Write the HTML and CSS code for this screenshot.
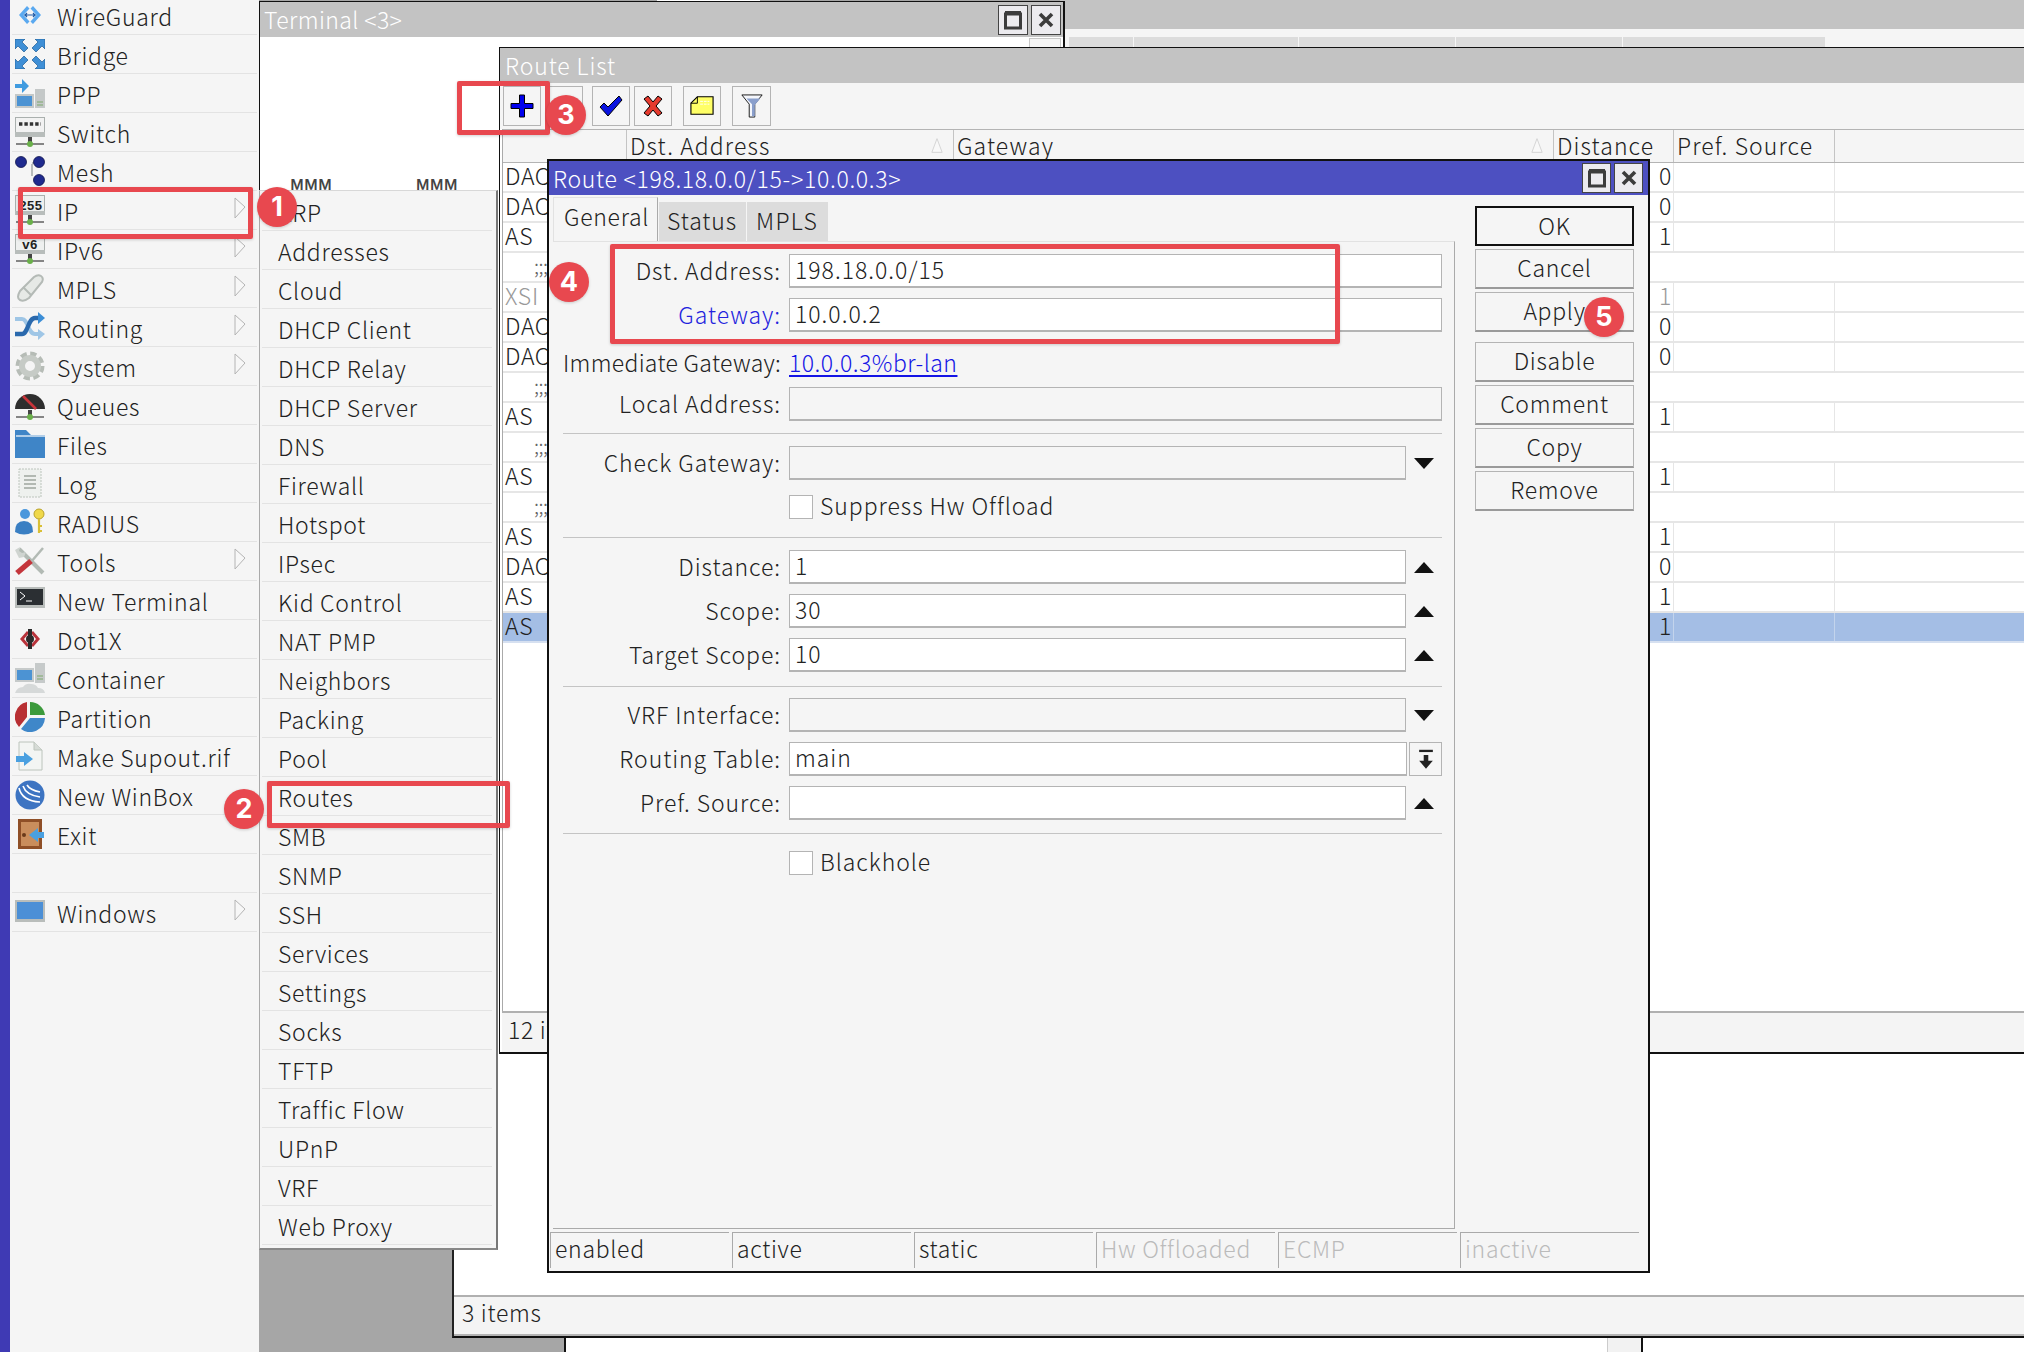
FILE: index.html
```html
<!DOCTYPE html>
<html lang="en">
<head>
<meta charset="utf-8">
<title>WinBox Route</title>
<link rel="stylesheet" href="styles.css">
</head>
<body>
<svg class="defs" width="0" height="0" aria-hidden="true">
  <symbol id="stand" viewBox="0 0 30 30">
    <rect x="13" y="20" width="4" height="7" fill="#444"/>
    <path d="M1 27h28" stroke="#555" stroke-width="1.4"/>
    <circle cx="15" cy="27" r="3" fill="#6ab04a"/>
  </symbol>
  <symbol id="chev" viewBox="0 0 12 24">
    <path d="M1 2v20L11 11Z" fill="#f7f7f7" stroke="#b4b4b4" stroke-width="1"/>
  </symbol>
</svg>
<div class="app">
  <div class="strip"></div>
  <nav class="menu">
    <div class="mrow"><svg class="ico" viewBox="0 0 30 30"><path d="M12 6 4 15l8 9 2.500-2.500L8.500 15l6-6.500zM18 6l8 9-8 9-2.500-2.500 6-6.500-6-6.500z" fill="#5aa9f0"/><path d="M9 15h12M12 13l-2 2 2 2M18 13l2 2-2 2" stroke="#1c5aa8" stroke-width="1.200" fill="none"/></svg><span>WireGuard</span></div>
    <div class="mrow"><svg class="ico" viewBox="0 0 30 30"><g fill="#3f8fd6" stroke="#1f5c94" stroke-width=".7"><path d="M0 0h10L7 3l6 6-4 4-6-6-3 3z"/><path d="M30 0H20l3 3-6 6 4 4 6-6 3 3z"/><path d="M0 30h10l-3-3 6-6-4-4-6 6-3-3z"/><path d="M30 30H20l3-3-6-6 4-4 6 6 3-3z"/></g></svg><span>Bridge</span></div>
    <div class="mrow"><svg class="ico" viewBox="0 0 30 30"><path d="M0 6h7V1l7 7-7 7v-5H0z" fill="#3f9be0"/><rect x="20" y="11" width="10" height="19" fill="#c4c8c8"/><rect x="0" y="16" width="19" height="14" fill="#c4c8c8"/><rect x="2" y="18" width="15" height="10" fill="#4c93d3"/><path d="M22 24h6M22 27h6" stroke="#7ca86c"/></svg><span>PPP</span></div>
    <div class="mrow"><svg class="ico" viewBox="0 0 30 30"><rect x=".5" y=".5" width="29" height="19" fill="#f2f2f2" stroke="#aab0ae"/><rect y="15" width="30" height="5" fill="#b8bdbb"/><path d="M4 7h22" stroke="#333" stroke-width="3.400" stroke-dasharray="3.400 2"/><use href="#stand" width="30" height="30"/></svg><span>Switch</span></div>
    <div class="mrow"><svg class="ico" viewBox="0 0 30 30"><path d="M17 7H20M17 8v12" stroke="#b8bcbc" stroke-width="2" fill="none"/><g fill="#1f2a8e" stroke="#10154e" stroke-width=".8"><circle cx="6" cy="6" r="5.500"/><circle cx="24" cy="6" r="5.500"/><circle cx="24" cy="24" r="5.500"/></g></svg><span>Mesh</span></div>
    <div class="mrow"><svg class="ico" viewBox="0 0 30 30"><rect x=".5" y=".5" width="29" height="19" fill="#eef0ef" stroke="#aab0ae"/><rect y="16" width="30" height="4" fill="#b8bdbb"/><text x="4" y="15" class="icotext">255</text><use href="#stand" width="30" height="30"/></svg><span>IP</span><svg class="chev"><use href="#chev"/></svg></div>
    <div class="mrow"><svg class="ico" viewBox="0 0 30 30"><rect x=".5" y=".5" width="29" height="19" fill="#eef0ef" stroke="#aab0ae"/><rect y="16" width="30" height="4" fill="#b8bdbb"/><text x="7" y="15" class="icotext">v6</text><use href="#stand" width="30" height="30"/></svg><span>IPv6</span><svg class="chev"><use href="#chev"/></svg></div>
    <div class="mrow"><svg class="ico" viewBox="0 0 30 30"><path d="M5 18 19 4q4-3 7-1t1 6L14 25q-5 4-9 2t0-9Z" fill="#e6e9e6" stroke="#b4bab6" stroke-width="2"/><path d="m8 14 8 8" stroke="#b4bab6" stroke-width="2"/></svg><span>MPLS</span><svg class="chev"><use href="#chev"/></svg></div>
    <div class="mrow"><svg class="ico" viewBox="0 0 30 30"><path d="M0 7h7c6 0 6 15 13 15h3" stroke="#9fc6e6" stroke-width="4" fill="none"/><path d="M23 17l7 5-7 6z" fill="#9fc6e6"/><path d="M0 22h7c6 0 6-16 13-16h3" stroke="#2a69ad" stroke-width="4.400" fill="none"/><path d="M23 0l7 6-7 6z" fill="#3c8ed6"/></svg><span>Routing</span><svg class="chev"><use href="#chev"/></svg></div>
    <div class="mrow"><svg class="ico" viewBox="0 0 30 30"><circle cx="15" cy="15" r="12" fill="none" stroke="#b6bcb6" stroke-width="5" stroke-dasharray="6 3.400"/><circle cx="15" cy="15" r="8" fill="none" stroke="#c6cbc6" stroke-width="6"/></svg><span>System</span><svg class="chev"><use href="#chev"/></svg></div>
    <div class="mrow"><svg class="ico" viewBox="0 0 30 30"><path d="M0 19a15 15 0 0 1 30 0Z" fill="#2e2e2e"/><path d="M8 6l13 13" stroke="#c8343a" stroke-width="2.600"/><use href="#stand" width="30" height="30"/></svg><span>Queues</span></div>
    <div class="mrow"><svg class="ico" viewBox="0 0 30 30"><path d="M0 1h11l5 5h14v23H0z" fill="#3f85c7"/><path d="M1 7h29" stroke="#e4eef6" stroke-width="1.400"/></svg><span>Files</span></div>
    <div class="mrow"><svg class="ico" viewBox="0 0 30 30"><rect x="4" y="1" width="22" height="28" fill="#eef1ee" stroke="#bcc4bc" stroke-dasharray="2 1"/><path d="M9 8h12M9 12h12M9 16h12M9 20h12" stroke="#9ea69e" stroke-width="1.400"/></svg><span>Log</span></div>
    <div class="mrow"><svg class="ico" viewBox="0 0 30 30"><circle cx="10" cy="7" r="5" fill="#4a97dc"/><path d="M0 25q0-11 9-11t9 11q-9 5-18 0Z" fill="#3a7fc3"/><circle cx="24" cy="7" r="5" fill="#f0d84a" stroke="#b8a22c"/><path d="M24 12v14M24 19h3M24 24h3" stroke="#d9bf36" stroke-width="2.200"/></svg><span>RADIUS</span></div>
    <div class="mrow"><svg class="ico" viewBox="0 0 30 30"><path d="M4 3l24 24" stroke="#b2bab4" stroke-width="4"/><path d="M0 4l5-3-1 4 3 2 4-1-2 5-5 1z" fill="#cfd4d0"/><path d="M28 2l-12 14" stroke="#b2bab4" stroke-width="2.500"/><path d="M16 15 2 27" stroke="#c4353b" stroke-width="5.500"/></svg><span>Tools</span><svg class="chev"><use href="#chev"/></svg></div>
    <div class="mrow"><svg class="ico" viewBox="0 0 30 30"><rect y="2" width="30" height="21" fill="#b9bdbb"/><rect x="2" y="4" width="26" height="16" fill="#2b2f33"/><path d="M5 7l5 4-5 4M11 16h6" stroke="#fff" stroke-width="1" fill="none"/></svg><span>New Terminal</span></div>
    <div class="mrow"><svg class="ico" viewBox="0 0 30 30"><path d="M12 7 5 15l7 8 2-2-5-6 5-6zM18 7l7 8-7 8-2-2 5-6-5-6z" fill="#b8323a"/><rect x="13" y="5" width="4" height="20" fill="#2a2a2a"/><circle cx="15" cy="15" r="4" fill="#2a2a2a"/></svg><span>Dot1X</span></div>
    <div class="mrow"><svg class="ico" viewBox="0 0 30 30"><rect x="20" y="0" width="10" height="20" fill="#c6caca"/><rect x="0" y="5" width="19" height="14" fill="#c6caca"/><rect x="2" y="7" width="15" height="10" fill="#4c93d3"/><path d="M22 13h6M22 16h6" stroke="#7ca86c"/><path d="M0 30q2-6 8-6 3-4 8-3 5 0 7 4 6 0 7 5z" fill="#d6d9d9"/></svg><span>Container</span></div>
    <div class="mrow"><svg class="ico" viewBox="0 0 30 30"><path d="M15 0v13H30A15 15 0 0 0 15 0Z" fill="#3c9a3c"/><path d="M12 0A15 15 0 0 0 4 25L12 15Z" fill="#b82f33"/><path d="M15 16h15A15 15 0 0 1 6 27Z" fill="#3f87c9"/></svg><span>Partition</span></div>
    <div class="mrow"><svg class="ico" viewBox="0 0 30 30"><path d="M4 1h15l8 8v20H4z" fill="#f3f5f3" stroke="#bcc4bc"/><path d="M19 1v8h8" fill="#d6dbd6" stroke="#bcc4bc"/><path d="M1 15h8v-4l9 7-9 7v-4H1z" fill="#4aa0e0"/></svg><span>Make Supout.rif</span></div>
    <div class="mrow"><svg class="ico" viewBox="0 0 30 30"><circle cx="15" cy="15" r="14.500" fill="#3d74c2"/><path d="M4 8q3 13 21 14M8 6q3 9 17 11M12 5q3 5 13 7" stroke="#fff" stroke-width="1.600" fill="none"/></svg><span>New WinBox</span></div>
    <div class="mrow"><svg class="ico" viewBox="0 0 30 30"><rect x="3" y="0" width="24" height="30" fill="#8f4f27"/><rect x="6" y="3" width="18" height="24" fill="#c98d5c"/><circle cx="9" cy="16" r="2" fill="#6a3a1a"/><path d="M29 13h-6V9l-9 7 9 7v-4h6z" fill="#4aa0e0"/></svg><span>Exit</span></div>
    <div class="mrow"></div>
    <div class="mrow"><svg class="ico" viewBox="0 0 30 30"><rect y="3" width="30" height="22" fill="#b9bdbb"/><rect x="2" y="5" width="26" height="17" fill="#4c8fd6"/></svg><span>Windows</span><svg class="chev"><use href="#chev"/></svg></div>
  </nav>

  <section class="win win-back">
    <div class="back-title"></div>
    <div class="back-tabs"><i class="bt1"></i><i class="bt2"></i><i class="bt3"></i><i class="bt4"></i><i class="bt5"></i></div>
  </section>

  <div class="top-scrap"></div>

  <section class="win win-under">
    <div class="under-body"></div>
    <div class="under-status">3 items</div>
  </section>

  <div class="under-tail">
    <div class="tail-text">TTT     TTT  MMMMM</div>
    <div class="tail-box"></div>
  </div>

  <section class="win win-term">
    <header class="title grey term-title"><span>Terminal &lt;3&gt;</span>
      <div class="wbtns">
        <button class="wbtn"><svg viewBox="0 0 20 20"><path d="M2.500 4v14h15V4zM2 2.500h16" fill="none" stroke="#3c3c3c" stroke-width="3"/></svg></button>
        <button class="wbtn"><svg viewBox="0 0 20 20"><path d="M4 4l12 12M16 4 4 16" stroke="#3c3c3c" stroke-width="3.600"/></svg></button>
      </div>
    </header>
    <div class="term-body"><pre class="term-text">MMM      MMM</pre><i class="term-box"></i></div>
  </section>

  <section class="win win-list">
    <header class="title grey list-title"><span>Route List</span></header>
    <div class="toolbar">
      <button class="tbtn"><svg viewBox="0 0 24 24"><path d="M9.500 1h5v8.500H23v5h-8.500V23h-5v-8.500H1v-5h8.500z" fill="#0000ee" stroke="#000" stroke-width="1"/></svg></button>
      <button class="tbtn"></button>
      <button class="tbtn tbtn-gap"><svg viewBox="0 0 24 24"><path d="M1 13l4-4 4 4L20 2l3 4L9 22z" fill="#0a14e0" stroke="#000" stroke-width="1"/></svg></button>
      <button class="tbtn"><svg viewBox="0 0 24 24"><path d="M3 5l4-3 5 6 5-6 4 3-6 7 6 7-4 3-5-6-5 6-4-3 6-7z" fill="#e63a2e" stroke="#000" stroke-width="1"/></svg></button>
      <button class="tbtn tbtn-gap2"><svg viewBox="0 0 26 24"><path d="M1 9l7-7h17v19H1z" fill="#ffff66" stroke="#000" stroke-width="1.200"/><path d="M8 2v7H1" fill="none" stroke="#000"/><path d="M11 7h10M11 10h10" stroke="#fff" stroke-dasharray="3 1"/></svg></button>
      <button class="tbtn tbtn-gap2 tbtn-wide"><svg viewBox="0 0 24 26"><path d="M1 1h22l-8 10v14H9V11z" fill="#f4f6fb" stroke="#111" stroke-width="1"/><path d="M6 5h15l-6 7v12h-3V11z" fill="#8a9fcc"/></svg></button>
    </div>
    <div class="table">
      <div class="thead"><div class="c c1"></div><div class="c c2">Dst. Address<svg class="sort" viewBox="0 0 14 18"><path d="M7 1 1 17h12z" fill="#f8f8f8" stroke="#cfcfcf"/></svg></div><div class="c c3">Gateway<svg class="sort" viewBox="0 0 14 18"><path d="M7 1 1 17h12z" fill="#f8f8f8" stroke="#cfcfcf"/></svg></div><div class="c c4">Distance</div><div class="c c5">Pref. Source</div></div>
      <div class="tr"><div class="c c1">DAC</div><div class="c c2"></div><div class="c c3"></div><div class="c c4 num">0</div><div class="c c5"></div></div>
      <div class="tr"><div class="c c1">DAC</div><div class="c c2"></div><div class="c c3"></div><div class="c c4 num">0</div><div class="c c5"></div></div>
      <div class="tr"><div class="c c1">AS</div><div class="c c2"></div><div class="c c3"></div><div class="c c4 num">1</div><div class="c c5"></div></div>
      <div class="tr note"><div class="c c1">;;;</div></div>
      <div class="tr off"><div class="c c1">XSI</div><div class="c c2"></div><div class="c c3"></div><div class="c c4 num">1</div><div class="c c5"></div></div>
      <div class="tr"><div class="c c1">DAC</div><div class="c c2"></div><div class="c c3"></div><div class="c c4 num">0</div><div class="c c5"></div></div>
      <div class="tr"><div class="c c1">DAC</div><div class="c c2"></div><div class="c c3"></div><div class="c c4 num">0</div><div class="c c5"></div></div>
      <div class="tr note"><div class="c c1">;;;</div></div>
      <div class="tr"><div class="c c1">AS</div><div class="c c2"></div><div class="c c3"></div><div class="c c4 num">1</div><div class="c c5"></div></div>
      <div class="tr note"><div class="c c1">;;;</div></div>
      <div class="tr"><div class="c c1">AS</div><div class="c c2"></div><div class="c c3"></div><div class="c c4 num">1</div><div class="c c5"></div></div>
      <div class="tr note"><div class="c c1">;;;</div></div>
      <div class="tr"><div class="c c1">AS</div><div class="c c2"></div><div class="c c3"></div><div class="c c4 num">1</div><div class="c c5"></div></div>
      <div class="tr"><div class="c c1">DAC</div><div class="c c2"></div><div class="c c3"></div><div class="c c4 num">0</div><div class="c c5"></div></div>
      <div class="tr"><div class="c c1">AS</div><div class="c c2"></div><div class="c c3"></div><div class="c c4 num">1</div><div class="c c5"></div></div>
      <div class="tr sel"><div class="c c1">AS</div><div class="c c2"></div><div class="c c3"></div><div class="c c4 num">1</div><div class="c c5"></div></div>
    </div>
    <div class="list-status">12 items</div>
  </section>

  <nav class="submenu">
    <div class="srow">ARP</div><div class="srow">Addresses</div><div class="srow">Cloud</div>
    <div class="srow">DHCP Client</div><div class="srow">DHCP Relay</div><div class="srow">DHCP Server</div>
    <div class="srow">DNS</div><div class="srow">Firewall</div><div class="srow">Hotspot</div>
    <div class="srow">IPsec</div><div class="srow">Kid Control</div><div class="srow">NAT PMP</div>
    <div class="srow">Neighbors</div><div class="srow">Packing</div><div class="srow">Pool</div>
    <div class="srow">Routes</div><div class="srow">SMB</div><div class="srow">SNMP</div>
    <div class="srow">SSH</div><div class="srow">Services</div><div class="srow">Settings</div>
    <div class="srow">Socks</div><div class="srow">TFTP</div><div class="srow">Traffic Flow</div>
    <div class="srow">UPnP</div><div class="srow">VRF</div><div class="srow">Web Proxy</div>
  </nav>

  <section class="win win-dlg">
    <header class="title blue"><span>Route &lt;198.18.0.0/15-&gt;10.0.0.3&gt;</span>
      <div class="wbtns wbtns-dlg">
        <button class="wbtn"><svg viewBox="0 0 20 20"><path d="M2.500 4v14h15V4zM2 2.500h16" fill="none" stroke="#3c3c3c" stroke-width="3"/></svg></button>
        <button class="wbtn"><svg viewBox="0 0 20 20"><path d="M4 4l12 12M16 4 4 16" stroke="#3c3c3c" stroke-width="3.600"/></svg></button>
      </div>
    </header>
    <div class="dlg-main">
      <div class="tabs-area">
        <div class="tabs"><div class="tab on">General</div><div class="tab t-status">Status</div><div class="tab t-mpls">MPLS</div></div>
        <div class="panel">
          <div class="group g1">
            <div class="frow"><label>Dst. Address:</label><div class="inp">198.18.0.0/15</div></div>
            <div class="frow"><label class="lnk">Gateway:</label><div class="inp">10.0.0.2</div></div>
            <div class="frow linkrow"><label>Immediate Gateway:</label><a class="ulink">10.0.0.3%br-lan</a></div>
            <div class="frow"><label>Local Address:</label><div class="inp dis"></div></div>
          </div>
          <div class="group g2">
            <div class="frow"><label>Check Gateway:</label><div class="inp dis"></div><i class="tri dn"></i></div>
            <div class="frow chk"><label></label><i class="box"></i><span>Suppress Hw Offload</span></div>
          </div>
          <div class="group g3">
            <div class="frow"><label>Distance:</label><div class="inp">1</div><i class="tri up"></i></div>
            <div class="frow"><label>Scope:</label><div class="inp">30</div><i class="tri up"></i></div>
            <div class="frow"><label>Target Scope:</label><div class="inp">10</div><i class="tri up"></i></div>
          </div>
          <div class="group g4">
            <div class="frow"><label>VRF Interface:</label><div class="inp dis"></div><i class="tri dn"></i></div>
            <div class="frow"><label>Routing Table:</label><div class="inp">main</div><button class="dropbtn"><svg viewBox="0 0 14 18"><path d="M1 1.500h12" stroke="#222" stroke-width="2"/><path d="M5 5h4v5h4L7 17 1 10h4z" fill="#222"/></svg></button></div>
            <div class="frow"><label>Pref. Source:</label><div class="inp"></div><i class="tri up"></i></div>
          </div>
          <div class="group g5">
            <div class="frow chk"><label></label><i class="box"></i><span>Blackhole</span></div>
          </div>
        </div>
      </div>
      <div class="actions">
        <button class="act def">OK</button>
        <button class="act">Cancel</button>
        <button class="act">Apply</button>
        <button class="act sp">Disable</button>
        <button class="act">Comment</button>
        <button class="act">Copy</button>
        <button class="act">Remove</button>
      </div>
    </div>
    <div class="dstatus">
      <div class="cell">enabled</div><div class="cell">active</div><div class="cell">static</div>
      <div class="cell ghost">Hw Offloaded</div><div class="cell ghost">ECMP</div><div class="cell ghost">inactive</div>
    </div>
  </section>

  <div class="mark m1"></div>
  <div class="mark m2"></div>
  <div class="mark m3"></div>
  <div class="mark m4"></div>
  <div class="badge b1">1</div>
  <div class="badge b2">2</div>
  <div class="badge b3">3</div>
  <div class="badge b4">4</div>
  <div class="badge b5">5</div>
</div>
</body>
</html>
```

FILE: styles.css
```css
* { box-sizing: border-box; }
html, body { margin: 0; padding: 0; }
body {
  width: 2024px; height: 1352px; overflow: hidden;
  font-family: "Noto Sans CJK JP", "Noto Sans", sans-serif;
  font-size: 23px; font-weight: 300; color: #222; letter-spacing: .7px;
}
.defs { position: absolute; }
.app { position: relative; display: flex; width: 2024px; height: 1352px; overflow: hidden; background: #a6a6a6; }
.strip { width: 10px; background: #3f3ab4; flex: none; }

/* left menu */
.menu { width: 249px; flex: none; background: #f5f5f5; margin-top: -4px; padding: 0 2px; }
.mrow { display: flex; align-items: center; height: 39px; padding-left: 3px; border-bottom: 1px solid #e3e3e3; white-space: nowrap; line-height: 38px; }
.mrow span { padding-top: 2px; }
.ico { width: 30px; height: 30px; flex: none; margin-right: 12px; }
.icotext { font-family: "Liberation Mono", monospace; font-weight: 700; font-size: 13px; letter-spacing: 0; fill: #222; }
.chev { width: 12px; height: 24px; margin: 0 11px 5px auto; flex: none; }

/* submenu */
.submenu { position: absolute; left: 259px; top: 190px; width: 239px; height: 1060px; background: #f5f5f5; border-top: 1px solid #d8d8d8; border-right: 2px solid #777; border-left: 1px solid #aaa; border-bottom: 2px solid #888; padding: 1px 4px 0 2px; }
.srow { height: 39px; border-bottom: 1px solid #e3e3e3; padding-left: 16px; line-height: 40px; white-space: nowrap; }

/* windows */
.win { position: absolute; }
.title { display: flex; align-items: center; justify-content: space-between; height: 35px; line-height: 35px; padding-left: 4px; white-space: nowrap; }
.grey { background: #c3c3c3; color: #fff; }
.blue { background: #4d50c1; color: #fff; height: 34px; line-height: 32px; }
.term-title span { letter-spacing: .4px; }

.win-back { left: 1060px; top: 0; width: 964px; height: 48px; background: #f5f5f5; }
.back-title { height: 29px; background: #c3c3c3; }
.back-tabs { display: flex; gap: 1px; height: 11px; margin: 8px 0 0 9px; }
.back-tabs i { display: block; background: #dcdcdc; height: 11px; }
.bt1 { width: 64px; } .bt2 { width: 164px; } .bt3 { width: 156px; } .bt4 { width: 166px; } .bt5 { width: 202px; }

.top-scrap { position: absolute; left: 657px; top: 0; width: 103px; height: 1px; background: #fff; }

.win-under { left: 452px; top: 190px; width: 1572px; height: 1148px; border-left: 2px solid #222; border-bottom: 2px solid #111; display: flex; flex-direction: column; background: #fff; }
.under-body { flex: 1; background: #fff; }
.under-status { height: 41px; background: #f4f4f4; border-top: 2px solid #b0b0b0; border-bottom: 2px solid #b4b4b4; padding-left: 8px; line-height: 31px; }

.under-tail { position: absolute; left: 564px; top: 1338px; width: 1460px; height: 14px; background: #fff; border-left: 2px solid #111; overflow: hidden; }
.tail-text { position: absolute; left: 0; top: -18px; white-space: pre; font-family: "Liberation Mono", monospace; font-weight: 400; font-size: 23px; letter-spacing: 0; line-height: 22px; color: #111; }
.tail-box { position: absolute; left: 1041px; top: 0; width: 36px; height: 14px; background: #f2f2f2; border-left: 1px solid #ccc; border-right: 2px solid #111; }

.win-term { left: 259px; top: 1px; width: 806px; height: 195px; border: 1px solid #111; border-bottom: 0; border-right-width: 2px; background: #fff; }
.wbtns { display: flex; gap: 3px; padding-right: 2px; }
.wbtn { width: 30px; height: 30px; padding: 0; background: #ecebef; border: 1px solid #444; display: flex; align-items: center; justify-content: center; }
.wbtn svg { width: 20px; height: 20px; display: block; }
.term-body { position: relative; height: 160px; overflow: hidden; padding: 142px 0 0 30px; }
.term-text { margin: 0; font-family: "Liberation Mono", monospace; font-weight: 400; font-size: 23.300px; letter-spacing: 0; line-height: 20px; color: #444; }
.term-box { position: absolute; right: 2px; top: 1px; width: 32px; height: 10px; background: #f5f5f5; border: 1px solid #c8c8c8; }

.win-list { left: 499px; top: 47px; width: 1530px; height: 1007px; border: 1px solid #111; border-width: 1px 0 2px 1px; background: #fff; display: flex; flex-direction: column; }
.list-title { padding-left: 5px; }
.list-title span { letter-spacing: .9px; }
.toolbar { display: flex; align-items: center; height: 46px; background: #f5f5f5; padding-left: 3px; }
.tbtn { width: 38px; height: 40px; padding: 0; margin-right: 4px; background: #f5f5f5; border: 1px solid #b4b4b4; display: flex; align-items: center; justify-content: center; flex: none; }
.tbtn svg { width: 24px; height: 24px; }
.tbtn-gap { margin-left: 5px; }
.tbtn-gap2 { margin-left: 7px; }
.tbtn-wide { width: 39px; }
.table { flex: 1; margin-left: 2px; border-left: 1px solid #aaa; background: #fff; overflow: hidden; }
.thead { display: flex; height: 34px; background: #f5f5f5; border-top: 1px solid #b4b4b4; border-bottom: 1px solid #b4b4b4; line-height: 31px; letter-spacing: 1.100px; }
.thead .c { border-right: 1px solid #c4c4c4; padding-left: 3px; }
.tr { display: flex; height: 30px; border-bottom: 2px solid #e6e6e6; line-height: 25px; }
.c { flex: none; padding-left: 2px; white-space: nowrap; position: relative; }
.c1 { width: 124px; } .c2 { width: 327px; } .c3 { width: 600px; } .c4 { width: 120px; } .c5 { width: 161px; }
.tr .c4, .tr .c5 { border-right: 1px solid #e6e6e6; }
.num { padding-left: 105px; }
.sort { position: absolute; right: 10px; top: 7px; width: 12px; height: 17px; }
.note .c1 { padding-left: 31px; width: 124px; color: #666; font-size: 20px; letter-spacing: -.5px; }
.off { color: #999; }
.sel { background: #a4bee5; border-bottom-color: #d6e0f0; }
.sel .c { border-right-color: #c3d4ec; }
.list-status { height: 41px; background: #f4f4f4; border-top: 2px solid #b0b0b0; padding-left: 6px; margin-left: 2px; line-height: 33px; }

/* dialog */
.win-dlg { left: 547px; top: 159px; width: 1103px; height: 1114px; border: 2px solid #111; background: #f5f5f5; display: flex; flex-direction: column; }
.wbtns-dlg { padding-right: 5px; }
.wbtns-dlg .wbtn { width: 29px; height: 30px; }
.dlg-main { display: flex; height: 1034px; padding: 2px 0 0 4px; }
.tabs-area { width: 902px; flex: none; display: flex; flex-direction: column; }
.tabs { display: flex; align-items: flex-end; height: 44px; gap: 1px; }
.tab { height: 39px; line-height: 36px; padding-left: 8px; background: #dcdcdc; color: #222; }
.tab.on { width: 105px; height: 44px; background: #f5f5f5; padding-left: 10px; border-top: 1px solid #e2e2e2; border-left: 1px solid #e2e2e2; border-right: 1px solid #aaa; line-height: 36px; }
.t-status { width: 87px; letter-spacing: .9px; } .t-mpls { width: 81px; padding-left: 9px; letter-spacing: 1.300px; }
.panel { flex: 1; padding: 12px 12px 0 10px; border-top: 1px solid #e2e2e2; border-right: 1px solid #aaa; border-bottom: 1px solid #aaa; }
.group { display: flex; flex-direction: column; gap: 10px; border-bottom: 1px solid #c4c4c4; }
.g1 { padding-bottom: 12px; }
.g2 { padding: 12px 0 18px; }
.g3 { padding: 12px 0 14px; }
.g4 { padding: 11px 0 13px; }
.g5 { padding-top: 17px; border-bottom: 0; }
.frow { display: flex; align-items: center; height: 34px; white-space: nowrap; }
.frow label { width: 218px; flex: none; text-align: right; margin: 0 8px 3px 0; letter-spacing: .95px; }
.lnk { color: #2323dd; }
.inp { flex: 1; height: 34px; background: #fff; border: 1px solid #b4b4b4; border-bottom-width: 2px; padding-left: 5px; line-height: 28px; letter-spacing: 1px; }
.inp.dis { background: #f5f5f5; }
.linkrow { margin: 5px 0 -4px; }
.frow.linkrow label { letter-spacing: .3px; margin-bottom: 4px; }
.ulink { color: #1414e6; text-decoration: underline; text-underline-offset: 3px; margin-bottom: 4px; letter-spacing: .5px; }
.tri { display: block; flex: none; width: 36px; height: 34px; position: relative; }
.tri::after { content: ""; position: absolute; left: 8px; top: 12px; border-left: 10px solid transparent; border-right: 10px solid transparent; }
.tri.dn::after { border-top: 11px solid #111; }
.tri.up::after { border-bottom: 11px solid #111; top: 12px; }
.dropbtn { width: 33px; height: 34px; margin-left: 2px; padding: 0; flex: none; border: 1px solid #b4b4b4; background: #f5f5f5; display: flex; align-items: center; justify-content: center; }
.dropbtn svg { width: 16px; height: 21px; }
.chk { height: 24px; margin-top: 5px; }
.chk span { margin-bottom: 4px; letter-spacing: .95px; }
.frow.chk label { margin-bottom: 0; }
.g5 .chk { margin-top: 0; }
.box { display: block; width: 24px; height: 24px; background: #fff; border: 1px solid #b4b4b4; margin-right: 7px; flex: none; }
.actions { width: 159px; margin: 9px 0 0 20px; display: flex; flex-direction: column; gap: 3px; flex: none; }
.act { height: 40px; padding: 0 0 5px; background: #f5f5f5; border: 1px solid #b4b4b4; border-bottom: 2px solid #9a9a9a; font: inherit; letter-spacing: inherit; color: #222; }
.act.def { border: 2px solid #111; padding-bottom: 6px; }
.act.sp { margin-top: 7px; }
.dstatus { display: grid; grid-template-columns: repeat(6, 179px); gap: 3px; padding: 3px 0 0 1px; }
.cell { height: 36px; border-top: 1px solid #aaa; border-left: 1px solid #aaa; padding-left: 4px; line-height: 31px; white-space: nowrap; }
.ghost { color: #bbb; }

/* annotations */
.mark { position: absolute; border: 5px solid #e8484f; border-radius: 2px; box-shadow: 0 1px 3px rgba(0,0,0,.18); }
.m1 { left: 18px; top: 187px; width: 235px; height: 52px; }
.m2 { left: 267px; top: 781px; width: 243px; height: 47px; }
.m3 { left: 457px; top: 81px; width: 93px; height: 54px; }
.m4 { left: 610px; top: 244px; width: 730px; height: 100px; }
.badge { position: absolute; width: 40px; height: 40px; border-radius: 50%; background: #e8484f; color: #fff; font-family: "Inter", "Liberation Sans", sans-serif; font-weight: 700; font-size: 27px; letter-spacing: 0; line-height: 40px; text-align: center; box-shadow: 0 1px 3px rgba(0,0,0,.18); }
.b1 { left: 257px; top: 187px; }
.b2 { left: 224px; top: 789px; }
.b3 { left: 546px; top: 95px; }
.b4 { left: 549px; top: 262px; }
.b5 { left: 1584px; top: 297px; }
```
